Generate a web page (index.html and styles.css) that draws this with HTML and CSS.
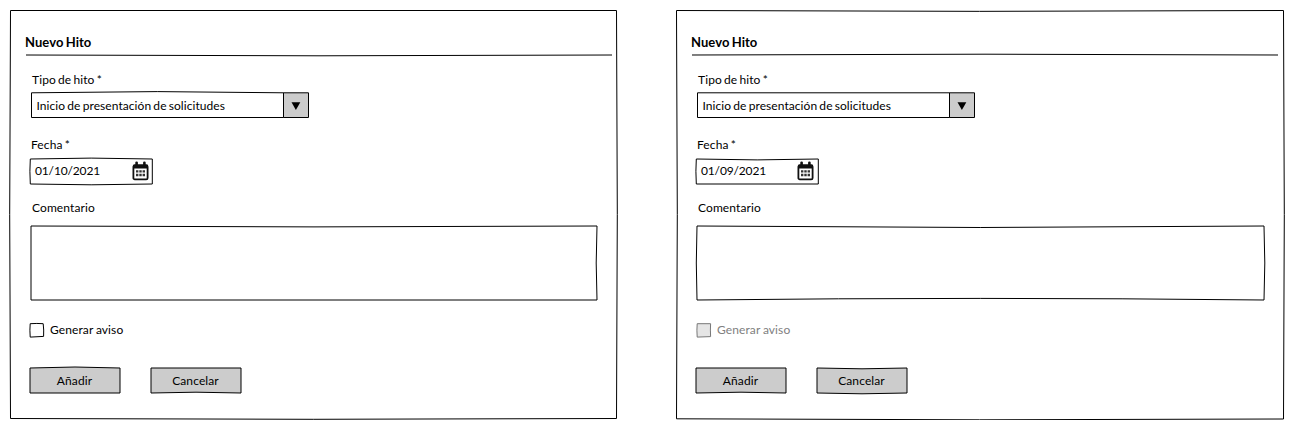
FILE: index.html
```html
<!DOCTYPE html>
<html lang="es">
<head>
<meta charset="utf-8">
<title>Nuevo Hito</title>
<link rel="stylesheet" href="styles.css">
</head>
<body>
<svg class="defs" width="0" height="0">
  <symbol id="calendar" viewBox="0 0 17 20">
    <rect x="1.4" y="4.4" width="14.2" height="13.9" rx="1.4" fill="#fff" stroke="#111" stroke-width="1.8"/>
    <rect x="1" y="3.6" width="15" height="4" rx="1" fill="#111"/>
    <rect x="3.3" y="0.6" width="2.6" height="5" rx="1.2" fill="#111"/>
    <rect x="11.1" y="0.6" width="2.6" height="5" rx="1.2" fill="#111"/>
    <path d="M4 9.2h2.4v2.4h-2.4zM7.3 9.2h2.4v2.4h-2.4zM10.6 9.2h2.4v2.4h-2.4zM4 12.8h2.4v2.4h-2.4zM7.3 12.8h2.4v2.4h-2.4zM10.6 12.8h2.4v2.4h-2.4z" fill="#333"/>
  </symbol>
</svg>
<main class="board">
  <section class="panel sketch">
    <svg class="frame"><path d="M.5 .5H606.5Q608.1 204.5 606.5 408.5Q303 410.1 .5 408.5Q-1.1 204.5 .5 .5Z"/></svg>
    <form class="form">
      <h1 class="title">Nuevo Hito</h1>
      <svg class="divider"><path d="M0 3Q293 4.6 586 3"/></svg>
      <div class="label label-type">Tipo de hito *</div>
      <div class="select sketch">
        <svg class="frame"><path d="M.5 .8Q126 -1.6 252.5 .8V25.5H.5Z"/><path class="fill" d="M252.5 .8H277.5V25.5H252.5Z"/><path class="arrow" d="M260.5 10.3H269.3L264.9 18Z"/></svg>
        <span class="value">Inicio de presentación de solicitudes</span>
      </div>
      <div class="label label-date">Fecha *</div>
      <div class="date sketch">
        <svg class="frame"><path d="M.3 1Q61 -.8 122.3 1V26Q61 27.6 .3 26Q-.5 13 .3 1Z"/></svg>
        <span class="value">01/10/2021</span>
        <svg class="calendar"><use href="#calendar"/></svg>
      </div>
      <div class="label label-comment">Comentario</div>
      <div class="comment sketch">
        <svg class="frame"><path d="M0 1Q283 2.8 566 1Q564.4 38 566 75H0Z"/></svg>
      </div>
      <div class="check">
        <svg class="box"><path d="M.2 .7Q7 .2 13.2 .7Q14 7 13.6 13.4L.2 14.1Q-.4 7 .2 .7Z"/></svg>
        <span>Generar aviso</span>
      </div>
      <div class="actions">
        <button class="button sketch" type="button">
          <svg class="frame"><path d="M0 1Q45 -1 90 1V26H0Z"/></svg>
          <span>Añadir</span>
        </button>
        <button class="button sketch" type="button">
          <svg class="frame"><path d="M0 1H90V26Q45 24.4 0 26Z"/></svg>
          <span>Cancelar</span>
        </button>
      </div>
    </form>
  </section>
  <section class="panel sketch">
    <svg class="frame"><path d="M.5 .5Q303 2.2 607.5 .5Q609.1 204.5 607.5 409Q303 410.7 .5 408.8Q2.1 204.5 .5 .5Z"/></svg>
    <form class="form">
      <h1 class="title">Nuevo Hito</h1>
      <svg class="divider"><path d="M0 3Q293 1.4 586 3"/></svg>
      <div class="label label-type">Tipo de hito *</div>
      <div class="select sketch">
        <svg class="frame"><path d="M.5 .8H252.5V25.5H.5Z"/><path class="fill" d="M252.5 .8H277.5V25.5H252.5Z"/><path class="arrow" d="M260.5 10.3H269.3L264.9 18Z"/></svg>
        <span class="value">Inicio de presentación de solicitudes</span>
      </div>
      <div class="label label-date">Fecha *</div>
      <div class="date sketch">
        <svg class="frame"><path d="M.3 1Q61 2.8 122.3 1V26H.3Q-.5 13 .3 1Z"/></svg>
        <span class="value">01/09/2021</span>
        <svg class="calendar calendar-left"><use href="#calendar"/></svg>
      </div>
      <div class="label label-comment">Comentario</div>
      <div class="comment sketch">
        <svg class="frame"><path d="M0 1Q283 4 567 1Q568.6 38 567 75Q283 71.8 0 75Q-1.4 38 0 1Z"/></svg>
      </div>
      <div class="check disabled">
        <svg class="box"><path d="M.2 .7H13.6Q13.2 7 13.6 13.6L.2 14.1Q-.4 7 .2 .7Z"/></svg>
        <span>Generar aviso</span>
      </div>
      <div class="actions">
        <button class="button sketch" type="button">
          <svg class="frame"><path d="M0 1H90V26Q45 24.4 0 26Z"/></svg>
          <span>Añadir</span>
        </button>
        <button class="button sketch" type="button">
          <svg class="frame"><path d="M0 1Q45 2.6 90 1V26Q45 27.6 0 26Z"/></svg>
          <span>Cancelar</span>
        </button>
      </div>
    </form>
  </section>
</main>
</body>
</html>
```
FILE: styles.css
```css
* { box-sizing: border-box; }
body {
  margin: 0;
  background: #fff;
  color: #000;
  font: 12px/20px Lato, "Liberation Sans", sans-serif;
  letter-spacing: .1px;
  word-spacing: -1px;
}
svg { display: block; overflow: visible; }
.defs { height: 0; }

.board { display: flex; gap: 58px; padding: 10px 0 0 10px; }
.panel { width: 608px; height: 410px; }

/* A hand-drawn outline shares one grid cell with its content */
.sketch { display: grid; grid-template: 100% / 100%; }
.sketch > * { grid-area: 1 / 1; }
.frame { width: 100%; height: 100%; }
.frame path, .divider path, .box path { fill: #fff; stroke: #000; stroke-width: 1; }
.frame .fill, .button .frame path { fill: #ccc; }
.frame .arrow { fill: #000; stroke: none; }

.form { display: flex; flex-direction: column; align-items: flex-start; padding: 22px 0 0 20px; }
.title { margin: 0 0 0 -5px; font-size: 13px; line-height: 20px; font-weight: 700; letter-spacing: .06px; }
.divider { width: 586px; height: 6px; margin-left: -4px; }
.divider path { fill: none; }

.label { height: 20px; }
.label-type { margin: 12px 0 2px 2px; }
.label-date { margin: 17px 0 3px 1px; }
.label-comment { margin: 13px 0 7px 2px; }

.select { width: 278px; height: 26px; margin-left: 1px; }
.value { align-self: center; padding-left: 5px; }
.select .value { margin-top: 2px; padding-left: 5.5px; letter-spacing: .07px; }
.date { width: 123px; height: 27px; }
.date .value { margin-top: -2px; letter-spacing: -.15px; }
.calendar { width: 17px; height: 20px; margin: 3px 0 0 102px; }
.calendar-left { margin-left: 101px; }
.comment { width: 567px; height: 76px; margin-left: 1px; }

.check { display: flex; align-items: center; gap: 6px; height: 20px; margin-top: 19px; word-spacing: -.4px; }
.box { width: 14px; height: 14px; }
.disabled { margin-left: 1px; color: #808080; }
.disabled .box path { fill: #e5e5e5; stroke: #777; }

.actions { display: flex; gap: 30px; margin-top: 27px; }
.button {
  width: 91px;
  height: 27px;
  padding: 0;
  border: 0;
  background: none;
  color: inherit;
  font: inherit;
  letter-spacing: inherit;
}
.button span { place-self: center; padding-right: 2px; }
```
